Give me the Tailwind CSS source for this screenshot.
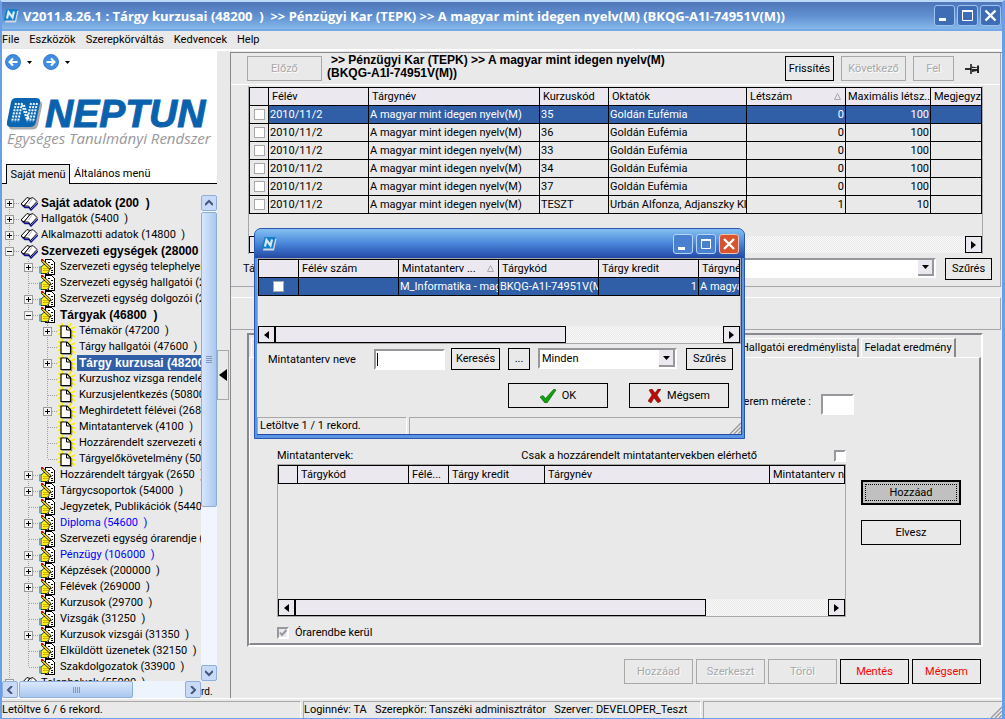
<!DOCTYPE html>
<html lang="hu">
<head>
<meta charset="utf-8">
<title>Neptun</title>
<script src="https://cdn.jsdelivr.net/npm/@tailwindcss/browser@4"></script>
</head>
<body class="relative flex h-screen min-h-[719px] flex-col overflow-hidden border-t-2 border-r-3 border-b border-l-2 border-[#6a9fe8] border-t-[#bcd8f8] bg-[#e9e9e9] font-['Roboto','Liberation_Sans',sans-serif] text-[11px] leading-4 text-black">

<svg class="hidden" aria-hidden="true">
  <symbol id="book" viewBox="0 0 18 16">
    <path d="M2 10L5 12.500L9 12.500L11 15L18 8" fill="none" stroke="#1010a0" stroke-width="1.500"/>
    <path d="M1 9L7 2.500L10 3.500L4 11Z" fill="#fff" stroke="#000"/>
    <path d="M10 3.500L13 2.500L17 6.500L10.500 13.500L8.500 11L4 11Z" fill="#fff" stroke="#000"/>
    <path d="M13 2.500L8.500 9" stroke="#b0b0b0"/>
  </symbol>
  <symbol id="hand" viewBox="0 0 16 16">
    <g shape-rendering="crispEdges">
      <path d="M7.500 .5H12.500L15.500 3.500V15.500H6.500V.5Z" fill="#fff" stroke="#000"/>
      <path d="M9 3h2M12 5h2M13 8h1M12 11h2M12 13h2M9 14h1" stroke="#000"/>
    </g>
    <path d="M2 8L5 5.500H8L12.500 9.500L10 10.500V13L8 14.500H2Z" fill="#ffee22" stroke="#000" stroke-width=".7"/>
    <path d="M3 1.500L11.500 9.500" stroke="#000" stroke-width="2.600"/>
    <path d="M3.500 2L11 9" stroke="#ffee22" stroke-width="1.400"/>
    <path d="M4 9.500h5M4 11.500h5" stroke="#b89800" stroke-width=".7"/>
    <rect x="2" y="0" width="2" height="2" fill="#c01010"/>
    <path d="M2 7.500H.5V14H2" fill="none" stroke="#18c8d8"/>
  </symbol>
  <symbol id="page" viewBox="0 0 17 16">
    <path d="M8 8L0 2M8 8L3-1M8 8L14-1M8 8L17 4M8 8L17 14M8 8L17 9M8 8L-1 7M8 8L-1 12M8 8L2 17M8 8L13 17" stroke="#fff000" stroke-width="1.800"/>
    <path d="M3 3H9L12.500 6.500V14.500H3Z" fill="#fff" stroke="#000" stroke-width="1.200"/>
    <path d="M8.500 3V7H12.500" fill="none" stroke="#000"/>
    <path d="M4 15.800H13.700V7" fill="none" stroke="#555" stroke-width=".8"/>
  </symbol>
  <symbol id="mark" viewBox="0 0 36 32">
    <path d="M9 3H31Q36 3 35 8L31 27Q30 31.500 25 31.500H5Q1 31 2 27Z" fill="#a9a9ae"/>
    <path d="M9 0H29Q34 0 33 5L29 24Q28 29 23 29H4Q-1 29 0 24L4 4Q5 0 9 0Z" fill="#0a66b2"/>
    <path d="M9 5L5 24M12 5L8 24M15 5L11 24M27 5L23 24M24 5L20 24M30 5L26 24M15 7L20 22M17 7L22 22" fill="none" stroke="#e8f3fc" stroke-width="2" stroke-dasharray="2 1.200"/>
  </symbol>
  <symbol id="small-mark" viewBox="0 0 16 14">
    <path d="M5 2H15.500L13 13.500H2Z" fill="#d4d8e0"/>
    <path d="M3.500 0H14.500L12 11.500H.5Z" fill="#1480cc"/>
    <path d="M4 9.500L5.500 3L9.500 8.500L11 2.500" fill="none" stroke="#d8ecfa" stroke-width="2.200"/>
  </symbol>
</svg>

<header class="flex h-[29px] shrink-0 items-center border-b-2 border-[#74a8e6] bg-linear-to-b from-[#4f76b8] via-[#5f8fd0] to-[#86b8ea] pr-px pl-px">
  <svg class="h-[14px] w-4"><use href="#small-mark"/></svg>
  <h1 class="ml-[4px] flex-1 truncate font-['Open_Sans',sans-serif] text-[13px] font-bold whitespace-pre text-white">V2011.8.26.1 : Tárgy kurzusai (48200  )  &gt;&gt; Pénzügyi Kar (TEPK) &gt;&gt; A magyar mint idegen nyelv(M) (BKQG-A1I-74951V(M))</h1>
  <div class="flex gap-[2px]">
    <button aria-label="Kis méret" class="flex h-[21px] w-[21px] rounded-[3px] border border-[#9cc4f0] bg-[#3e6db6]"><svg class="h-full w-full" viewBox="0 0 19 19"><path d="M4 13.500h7" stroke="#fff" stroke-width="3"/></svg></button>
    <button aria-label="Teljes méret" class="flex h-[21px] w-[21px] rounded-[3px] border border-[#9cc4f0] bg-[#3e6db6]"><svg class="h-full w-full" viewBox="0 0 19 19"><path d="M4.500 5v9.500h10V5" fill="none" stroke="#fff"/><path d="M4 5h11" stroke="#fff" stroke-width="2"/></svg></button>
    <button aria-label="Bezárás" class="flex h-[21px] w-[21px] rounded-[3px] border border-[#9cc4f0] bg-[#3e6db6]"><svg class="h-full w-full" viewBox="0 0 19 19"><path d="M4.500 4.500l10 10M14.500 4.500l-10 10" stroke="#fff" stroke-width="2.400"/></svg></button>
  </div>
</header>

<nav class="flex h-5 shrink-0 items-center gap-[10px] border-b-2 border-white">
  <a href="#">File</a><a href="#">Eszközök</a><a href="#">Szerepkörváltás</a><a href="#">Kedvencek</a><a href="#">Help</a>
</nav>

<div class="flex min-h-0 flex-1">
  <aside class="flex w-[215px] shrink-0 flex-col">
    <div class="h-[113px] shrink-0 bg-white pt-[3px] pl-[3px]">
      <div class="flex items-center gap-[6px]">
        <button aria-label="Vissza"><svg class="h-4 w-4" viewBox="0 0 16 16"><circle cx="8" cy="8" r="7.500" fill="#3f8ee4" stroke="#2a6cc0" stroke-width=".8"/><path d="M12.500 8H5M8 4.500L4.500 8L8 11.500" fill="none" stroke="#fff" stroke-width="2"/></svg></button>
        <button aria-label="Előzmények" class="w-[10px]"><svg class="h-[3px] w-[5px]" viewBox="0 0 5 3"><path d="M0 0h5L2.500 3z"/></svg></button>
        <button aria-label="Előre"><svg class="h-4 w-4" viewBox="0 0 16 16"><circle cx="8" cy="8" r="7.500" fill="#3f8ee4" stroke="#2a6cc0" stroke-width=".8"/><path d="M3.500 8H11M8 4.500L11.500 8L8 11.500" fill="none" stroke="#fff" stroke-width="2"/></svg></button>
        <button aria-label="Következők" class="w-[10px]"><svg class="h-[3px] w-[5px]" viewBox="0 0 5 3"><path d="M0 0h5L2.500 3z"/></svg></button>
      </div>
      <div class="mt-[28px] flex h-[32px] items-center gap-[2px] pl-[2px]">
        <svg class="h-8 w-9"><use href="#mark"/></svg>
        <div class="font-['Liberation_Sans',sans-serif] text-[39px] leading-8 font-bold text-[#0a62ae] italic [-webkit-text-stroke:1px_#0a62ae]">NEPTUN</div>
      </div>
      <div class="pl-[2px] font-['Open_Sans',sans-serif] text-[15px] leading-4 whitespace-nowrap text-[#98989c] italic">Egységes Tanulmányi Rendszer</div>
    </div>
    <div class="flex h-5 shrink-0 bg-white">
      <div class="w-1 border-b border-black"></div>
      <button class="w-16 border-x border-t border-black bg-[#e9e9e9] whitespace-nowrap">Saját menü</button>
      <button class="flex-1 border-b border-black pl-1 text-left">Általános menü</button>
    </div>
    <div class="flex min-h-0 flex-1 pt-[11px]">
      <div class="flex min-w-0 flex-1 flex-col">
        <ul id="tree" class="min-h-0 flex-1 overflow-hidden"></ul>
        <div class="flex h-[17px] shrink-0 bg-[#eef4fe]">
          <button aria-label="Balra" class="flex w-4 items-center justify-center rounded-[2px] border border-[#8faed8] bg-[#c8daf8]"><svg class="h-2 w-2" viewBox="0 0 8 8"><path d="M6 0L2 4l4 4" fill="none" stroke="#44587c" stroke-width="2"/></svg></button>
          <div class="ml-px flex w-[114px] items-center justify-center gap-px rounded-[2px] border border-[#8faed8] bg-linear-to-b from-[#dbe8ff] to-[#a9c8ee]"><i class="h-[6px] w-px bg-[#8098c0]"></i><i class="h-[6px] w-px bg-[#8098c0]"></i><i class="h-[6px] w-px bg-[#8098c0]"></i><i class="h-[6px] w-px bg-[#8098c0]"></i></div>
          <button aria-label="Jobbra" class="ml-auto flex w-4 items-center justify-center rounded-[2px] border border-[#8faed8] bg-[#c8daf8]"><svg class="h-2 w-2" viewBox="0 0 8 8"><path d="M2 0l4 4l-4 4" fill="none" stroke="#44587c" stroke-width="2"/></svg></button>
        </div>
      </div>
      <div class="flex w-4 shrink-0 flex-col bg-[#f0f5fe]">
        <button aria-label="Fel görgetés" class="flex h-4 items-center justify-center rounded-[2px] border border-[#8faed8] bg-[#c8daf8]"><svg class="h-2 w-2" viewBox="0 0 8 8"><path d="M0 6L4 2l4 4" fill="none" stroke="#44587c" stroke-width="2"/></svg></button>
        <div class="mt-px flex h-[295px] flex-col items-center justify-center gap-px rounded-[2px] border border-[#8faed8] bg-linear-to-r from-[#d8e6fe] to-[#a9c8ee]"><i class="h-px w-[6px] bg-[#8098c0]"></i><i class="h-px w-[6px] bg-[#8098c0]"></i><i class="h-px w-[6px] bg-[#8098c0]"></i><i class="h-px w-[6px] bg-[#8098c0]"></i></div>
        <button aria-label="Le görgetés" class="mt-auto flex h-4 items-center justify-center rounded-[2px] border border-[#8faed8] bg-[#c8daf8]"><svg class="h-2 w-2" viewBox="0 0 8 8"><path d="M0 2l4 4l4-4" fill="none" stroke="#44587c" stroke-width="2"/></svg></button>
        <div class="flex h-[17px] items-end bg-[#e9e9e9] text-[10px]"><span class="leading-3">rd.</span></div>
      </div>
    </div>
  </aside>

  <button aria-label="Panel elrejtése" class="mt-[299px] flex h-[50px] w-3 shrink-0 items-center justify-center border border-[#a8a8a8]"><svg class="h-3 w-2" viewBox="0 0 8 12"><path d="M8 0v12L0 6z"/></svg></button>

  <main class="ml-px mt-px flex min-w-0 flex-1 flex-col border-t border-l border-[#88888e]">
    <section class="mr-px flex shrink-0 flex-col border-r border-b border-[#a6a6a8] pb-[6px]">
      <div class="flex h-8 shrink-0 items-start border-b border-white pt-[3px] pr-[20px] pl-4">
        <button disabled class="h-[25px] w-[75px] shrink-0 border border-[#a8a8a8] text-[#a8a8a8] text-shadow-[1px_1px_0_#fff]">Előző</button>
        <h2 class="-mt-[2px] ml-[5px] w-[350px] font-['Liberation_Sans',sans-serif] text-[12px] leading-[13px] font-bold"><span class="pl-1">&gt;&gt; Pénzügyi Kar (TEPK) &gt;&gt; A magyar mint idegen nyelv(M)</span> (BKQG-A1I-74951V(M))</h2>
        <div class="ml-auto flex shrink-0 items-start gap-[7px]">
          <button class="h-[25px] w-[49px] border border-black">Frissítés</button>
          <button disabled class="h-[25px] w-[65px] border border-[#a8a8a8] text-[#a8a8a8] text-shadow-[1px_1px_0_#fff]">Következő</button>
          <button disabled class="h-[25px] w-[41px] border border-[#a8a8a8] text-[#a8a8a8] text-shadow-[1px_1px_0_#fff]">Fel</button>
          <button aria-label="Rögzítés" class="mt-2 ml-1"><svg class="h-[10px] w-[15px]" viewBox="0 0 15 10"><path d="M0 5h6" stroke="#000" stroke-width="1.600"/><path d="M6 0v10" stroke="#000" stroke-width="1.400"/><path d="M7 2.500L12 3.500V1.500H14V9H12V7L7 8Z" fill="#222"/><path d="M7 4.500h5" stroke="#ddd"/></svg></button>
        </div>
      </div>
      <div class="mx-[17px] mt-px flex h-[168px] flex-col border-x border-[#a8a8a8] pt-px">
        <div class="flex-1 overflow-hidden">
          <table class="w-full min-w-[733px] table-fixed border-collapse border border-black">
            <colgroup><col class="w-[19px]"><col class="w-[100px]"><col class="w-[171px]"><col class="w-[69px]"><col class="w-[138px]"><col class="w-[99px]"><col class="w-[85px]"><col></colgroup>
            <thead class="bg-[#ebe9ef]"><tr class="h-[18px]">
              <th class="border border-black"></th>
              <th class="border border-black pl-[3px] text-left font-normal">Félév</th>
              <th class="border border-black pl-[3px] text-left font-normal">Tárgynév</th>
              <th class="border border-black pl-[3px] text-left font-normal">Kurzuskód</th>
              <th class="border border-black pl-[3px] text-left font-normal">Oktatók</th>
              <th class="border border-black pr-1 pl-[3px] text-left font-normal"><span class="flex items-center justify-between">Létszám<svg class="h-[7px] w-[7px]" viewBox="0 0 7 7"><path d="M3.500 .5L6.500 6.500H.5z" fill="none" stroke="#a8a8a8"/></svg></span></th>
              <th class="overflow-hidden border border-black pl-[2px] text-left font-normal whitespace-nowrap">Maximális létsz...</th>
              <th class="overflow-hidden border border-black pl-[3px] text-left font-normal">Megjegyzés</th>
            </tr></thead>
            <tbody id="courses"></tbody>
          </table>
        </div>
        <div class="mb-px flex h-[17px] shrink-0 bg-[repeating-conic-gradient(#e8e8e8_0_25%,#fafafa_0_50%)] bg-size-[2px_2px]">
          <button aria-label="Balra" class="flex w-[17px] items-center justify-center border border-black bg-[#ebe9ef]"><svg class="h-2 w-[5px]" viewBox="0 0 5 8"><path d="M5 0v8L0 4z"/></svg></button>
          <button aria-label="Jobbra" class="ml-auto flex w-[17px] items-center justify-center border border-black bg-[#ebe9ef]"><svg class="h-2 w-[5px]" viewBox="0 0 5 8"><path d="M0 0v8l5-4z"/></svg></button>
        </div>
      </div>
      <div class="mt-[4px] flex items-start pr-2 pl-[12px]">
        <label for="filter" class="w-[94px] pt-[3px]">Tárgy szűrő</label>
        <div class="relative flex h-5 flex-1 border-2 border-[#98989c] border-r-white border-b-white bg-white">
          <select id="filter" class="w-full appearance-none bg-white"><option></option></select>
          <span class="pointer-events-none absolute inset-y-0 right-0 flex w-4 items-center justify-center border-r-2 border-b-2 border-[#98989c] bg-[#ebe9ef]"><svg class="h-1 w-[7px]" viewBox="0 0 7 4"><path d="M0 0h7L3.500 4z"/></svg></span>
        </div>
        <button class="ml-[9px] h-[22px] w-[47px] border border-black">Szűrés</button>
      </div>
    </section>

    <div class="mt-[10px] mr-px h-[33px] shrink-0 border-t border-r border-b border-[#a6a6a8] border-t-white"></div>

    <section class="mt-[3px] mr-[19px] ml-4 flex min-h-0 flex-1 flex-col border-2 border-[#88888e] border-r-white border-b-white pt-[2px]">
      <div class="flex h-5 shrink-0 items-end pl-[2px]" role="tablist">
        <div class="mr-[2px] h-[19px] w-[488px] rounded-tl-[2px] border-t border-l border-white"></div>
        <button role="tab" class="h-[19px] w-[118px] border-t border-r-2 border-white border-r-[#88888e] text-right whitespace-nowrap"><span class="pr-px">Hallgatói eredménylista</span></button>
        <button role="tab" class="ml-[2px] h-[19px] w-[95px] rounded-tl-[2px] border-t border-r-2 border-l border-white border-r-[#88888e] whitespace-nowrap">Feladat eredmény</button>
      </div>
      <div class="flex min-h-0 flex-1 flex-col border-t border-r-2 border-b-2 border-l border-white border-r-[#88888e] border-b-[#88888e] pr-[18px] pb-[2px] pl-[27px]">
        <div class="flex justify-end pt-[36px] pr-[107px]">
          <label for="room" class="mr-[10px]">Terem mérete :</label>
          <input id="room" class="h-[21px] w-[33px] border-2 border-[#98989c] border-r-white border-b-white bg-white">
        </div>
        <div class="mt-[33px] flex min-h-0 flex-1">
          <div class="flex min-w-0 flex-1 flex-col">
            <div class="flex h-4 items-center">
              <span>Mintatantervek:</span>
              <label for="only" class="mr-[77px] ml-auto">Csak a hozzárendelt mintatantervekben elérhető</label>
              <input id="only" type="checkbox" class="h-3 w-3 appearance-none border-2 border-[#98989c] border-r-white border-b-white bg-white">
            </div>
            <div class="flex min-h-0 flex-1 flex-col border border-[#a8a8a8]">
              <div class="min-h-0 flex-1 overflow-hidden">
                <table class="w-full table-fixed border-collapse border border-black bg-[#ebe9ef]">
                  <colgroup><col class="w-[19px]"><col class="w-[111px]"><col class="w-[40px]"><col class="w-[96px]"><col class="w-[225px]"><col></colgroup>
                  <thead><tr class="h-[18px]">
                    <th class="border border-black"></th>
                    <th class="border border-black pl-[3px] text-left font-normal">Tárgykód</th>
                    <th class="border border-black pl-[3px] text-left font-normal">Félé...</th>
                    <th class="border border-black pl-[3px] text-left font-normal">Tárgy kredit</th>
                    <th class="border border-black pl-[3px] text-left font-normal">Tárgynév</th>
                    <th class="overflow-hidden border border-r-0 border-black pl-[3px] text-left font-normal whitespace-nowrap">Mintatanterv neve</th>
                  </tr></thead>
                </table>
              </div>
              <div class="flex h-[17px] shrink-0 bg-[repeating-conic-gradient(#e8e8e8_0_25%,#fafafa_0_50%)] bg-size-[2px_2px]">
                <button aria-label="Balra" class="flex w-[17px] items-center justify-center border border-black bg-[#ebe9ef]"><svg class="h-2 w-[5px]" viewBox="0 0 5 8"><path d="M5 0v8L0 4z"/></svg></button>
                <div class="w-[411px] border border-black bg-[#ebe9ef]"></div>
                <button aria-label="Jobbra" class="ml-auto flex w-[17px] items-center justify-center border border-black bg-[#ebe9ef]"><svg class="h-2 w-[5px]" viewBox="0 0 5 8"><path d="M0 0v8l5-4z"/></svg></button>
              </div>
            </div>
            <label class="mt-2 flex items-center gap-[6px]">
              <span class="relative flex h-3 w-3"><input type="checkbox" checked disabled class="h-3 w-3 appearance-none border-2 border-[#98989c] border-r-white border-b-white bg-[#ebe9ef]"><svg class="pointer-events-none absolute inset-0 h-3 w-3" viewBox="0 0 12 12"><path d="M3 5.500l2 2.500l4.500-5" fill="none" stroke="#98989c" stroke-width="2"/></svg></span>
              Órarendbe kerül
            </label>
          </div>
          <div class="ml-[15px] flex w-[100px] flex-col gap-[15px] pt-8">
            <button class="h-[25px] border-2 border-black bg-[#c0c0c0] p-[2px]"><span class="flex h-full items-center justify-center border border-dotted border-black">Hozzáad</span></button>
            <button class="h-[25px] border border-black">Elvesz</button>
          </div>
        </div>
      </div>
    </section>

    <div class="mt-[12px] mr-[21px] mb-[14px] flex shrink-0 justify-end gap-[3px]">
      <button disabled class="h-[25px] w-[69px] border border-[#a8a8a8] text-[#a8a8a8] text-shadow-[1px_1px_0_#fff]">Hozzáad</button>
      <button disabled class="h-[25px] w-[69px] border border-[#a8a8a8] text-[#a8a8a8] text-shadow-[1px_1px_0_#fff]">Szerkeszt</button>
      <button disabled class="h-[25px] w-[69px] border border-[#a8a8a8] text-[#a8a8a8] text-shadow-[1px_1px_0_#fff]">Töröl</button>
      <button class="h-[25px] w-[69px] border border-black text-[#ff0000]">Mentés</button>
      <button class="h-[25px] w-[69px] border border-black text-[#ff0000]">Mégsem</button>
    </div>
  </main>
</div>

<footer class="flex h-5 shrink-0 gap-[2px] border-t border-white pt-[2px] whitespace-pre">
  <div class="w-[299px] border-t border-r border-[#a8a8a8] border-r-white">Letöltve 6 / 6 rekord.</div>
  <div class="w-[398px] border-t border-r border-l border-[#a8a8a8] border-r-white">Loginnév: TA   Szerepkör: Tanszéki adminisztrátor   Szerver: DEVELOPER_Teszt</div>
  <div class="flex flex-1 items-end justify-end border-t border-l border-[#a8a8a8]"><svg class="h-3 w-3" viewBox="0 0 12 12"><path d="M1 12L12 1M5 12l7-7M9 12l3-3" stroke="#98989c" stroke-width="1.300"/></svg></div>
</footer>

<section role="dialog" aria-label="Mintatanterv választó" class="absolute top-[226px] left-[252px] flex h-[211px] w-[491px] flex-col rounded-t-[7px] border border-[#2a56b0] bg-[#5a96e4]">
  <div class="flex h-[29px] shrink-0 items-center justify-between rounded-t-[6px] bg-linear-to-b from-[#84c0f0] via-[#4a86da] to-[#2448a4] pr-[5px] pl-[6px]">
    <svg class="h-[14px] w-4"><use href="#small-mark"/></svg>
    <div class="flex gap-[3px]">
      <button aria-label="Kis méret" class="h-5 w-5 rounded-[3px] border border-[#b8d4f4] bg-[#4a80d0]"><svg class="h-full w-full" viewBox="0 0 18 18"><path d="M4 13.500h7" stroke="#fff" stroke-width="3"/></svg></button>
      <button aria-label="Teljes méret" class="h-5 w-5 rounded-[3px] border border-[#b8d4f4] bg-[#4a80d0]"><svg class="h-full w-full" viewBox="0 0 18 18"><path d="M4.500 5v8.500h9V5" fill="none" stroke="#fff"/><path d="M4 5h10" stroke="#fff" stroke-width="2"/></svg></button>
      <button aria-label="Bezárás" class="h-5 w-5 rounded-[3px] border border-[#f0c0b0] bg-[#d9532c]"><svg class="h-full w-full" viewBox="0 0 18 18"><path d="M4 4l10 10M14 4L4 14" stroke="#fff" stroke-width="2.400"/></svg></button>
    </div>
  </div>
  <div class="mx-[2px] mb-[3px] flex min-h-0 flex-1 flex-col border-r border-b border-[#2448a4] bg-[#e9e9e9]">
    <div class="flex h-[86px] shrink-0 flex-col border border-[#a8a8a8]">
      <div class="flex-1 overflow-hidden">
        <table class="w-full table-fixed border-collapse border border-black">
          <colgroup><col class="w-[40px]"><col class="w-[100px]"><col class="w-[100px]"><col class="w-[100px]"><col class="w-[100px]"><col></colgroup>
          <thead class="bg-[#ebe9ef]"><tr class="h-[18px]">
            <th class="border border-black"></th>
            <th class="border border-black pl-[3px] text-left font-normal">Félév szám</th>
            <th class="border border-black pr-1 pl-[3px] text-left font-normal"><span class="flex items-center justify-between">Mintatanterv ...<svg class="h-[7px] w-[7px]" viewBox="0 0 7 7"><path d="M3.500 .5L6.500 6.500H.5z" fill="none" stroke="#a8a8a8"/></svg></span></th>
            <th class="border border-black pl-[3px] text-left font-normal">Tárgykód</th>
            <th class="border border-black pl-[3px] text-left font-normal">Tárgy kredit</th>
            <th class="overflow-hidden border border-black pl-[3px] text-left font-normal">Tárgynév</th>
          </tr></thead>
          <tbody><tr class="h-[18px] bg-[#305fa8] text-white">
            <td class="border border-black"><input type="checkbox" aria-label="Kijelölés" class="mx-auto block h-[11px] w-[11px] appearance-none border border-[#a8a8a8] bg-white"></td>
            <td class="border border-black"></td>
            <td class="overflow-hidden border border-black pl-px whitespace-nowrap">M_Informatika - magyar</td>
            <td class="overflow-hidden border border-black pl-px whitespace-nowrap">BKQG-A1I-74951V(M)</td>
            <td class="border border-black pr-px text-right">1</td>
            <td class="overflow-hidden border border-black pl-px whitespace-nowrap">A magyar mint</td>
          </tr></tbody>
        </table>
      </div>
      <div class="flex h-[17px] shrink-0 bg-[repeating-conic-gradient(#e8e8e8_0_25%,#fafafa_0_50%)] bg-size-[2px_2px]">
        <button aria-label="Balra" class="flex w-[17px] items-center justify-center border border-black bg-[#ebe9ef]"><svg class="h-2 w-[5px]" viewBox="0 0 5 8"><path d="M5 0v8L0 4z"/></svg></button>
        <div class="w-[291px] border border-black bg-[#ebe9ef]"></div>
        <button aria-label="Jobbra" class="ml-auto flex w-[17px] items-center justify-center border border-black bg-[#ebe9ef]"><svg class="h-2 w-[5px]" viewBox="0 0 5 8"><path d="M0 0v8l5-4z"/></svg></button>
      </div>
    </div>
    <div class="mt-1 flex items-start pr-2 pl-[11px]">
      <label for="plan" class="w-[106px] pt-1">Mintatanterv neve</label>
      <div class="relative mt-px h-[21px] w-[71px]">
        <input id="plan" class="block h-full w-full border-2 border-[#98989c] border-r-white border-b-white bg-white px-1 outline-none">
        <span class="pointer-events-none absolute top-[4px] left-[3px] h-[13px] w-px bg-black"></span>
      </div>
      <button class="ml-[6px] h-[22px] w-[49px] border border-black">Keresés</button>
      <button class="ml-2 h-[22px] w-[22px] border border-black">...</button>
      <div class="relative ml-2 h-[21px] w-[139px] border-2 border-[#98989c] border-r-white border-b-white bg-white">
        <select aria-label="Szűrő" class="block h-full w-full appearance-none bg-white pl-[2px]"><option>Minden</option></select>
        <span class="pointer-events-none absolute inset-y-0 right-0 flex w-4 items-center justify-center border-r-2 border-b-2 border-[#98989c] bg-[#ebe9ef]"><svg class="h-1 w-[7px]" viewBox="0 0 7 4"><path d="M0 0h7L3.500 4z"/></svg></span>
      </div>
      <button class="ml-auto h-[22px] w-[47px] border border-black">Szűrés</button>
    </div>
    <div class="mt-[13px] flex justify-end gap-[21px] pr-[12px]">
      <button class="flex h-[25px] w-[100px] items-center justify-center gap-[6px] border border-black"><svg class="h-[14px] w-4" viewBox="0 0 16 14"><path d="M0 8L3 6.500L5.500 9.500L14 0L16 1L7 14H5Z" fill="#10a010" stroke="#055c05" stroke-width=".6"/></svg>OK</button>
      <button class="flex h-[25px] w-[100px] items-center justify-center gap-[6px] border border-black"><svg class="h-[14px] w-[13px]" viewBox="0 0 13 14"><path d="M1 1L4 0L7 4L10 0H13L9 6L13 12L10 14L6 9L3 14L0 12L4 6Z" fill="#b80c0c" stroke="#700" stroke-width=".5"/></svg>Mégsem</button>
    </div>
    <div class="mt-auto flex h-[17px] gap-[2px]">
      <div class="w-[150px] border-t border-r border-l border-[#a8a8a8] border-r-white pl-[2px]">Letöltve 1 / 1 rekord.</div>
      <div class="flex flex-1 items-end justify-end border-t border-l border-[#a8a8a8]"><svg class="h-3 w-3" viewBox="0 0 12 12"><path d="M1 12L12 1M5 12l7-7M9 12l3-3" stroke="#98989c" stroke-width="1.300"/></svg></div>
    </div>
  </div>
</section>

<script>
  const courses = [
    ['35', 'Goldán Eufémia', 0, 100], ['36', 'Goldán Eufémia', 0, 100], ['33', 'Goldán Eufémia', 0, 100],
    ['34', 'Goldán Eufémia', 0, 100], ['37', 'Goldán Eufémia', 0, 100], ['TESZT', 'Urbán Alfonza, Adjanszky Klotild', 1, 10]
  ];
  document.getElementById('courses').innerHTML = courses.map((c, i) => `
    <tr class="${i ? 'h-[18px]' : 'h-[18px] bg-[#305fa8] text-white'}">
      <td class="border border-black bg-[#e9e9e9]"><input type="checkbox" aria-label="Kijelölés" class="mx-auto block h-[11px] w-[11px] appearance-none border border-[#a8a8a8] bg-white"></td>
      <td class="border border-black pl-px">2010/11/2</td>
      <td class="border border-black pl-px whitespace-nowrap">A magyar mint idegen nyelv(M)</td>
      <td class="border border-black pl-px">${c[0]}</td>
      <td class="overflow-hidden border border-black pl-px whitespace-nowrap">${c[1]}</td>
      <td class="border border-black pr-px text-right">${c[2]}</td>
      <td class="border border-black pr-px text-right">${c[3]}</td>
      <td class="border border-black"></td>
    </tr>`).join('');

  // [level, expander, label, style, last child of its parent]
  const nodes = [
    [0, '+', 'Saját adatok (200  )', 'b'], [0, '+', 'Hallgatók (5400  )'], [0, '+', 'Alkalmazotti adatok (14800  )'],
    [0, '-', 'Szervezeti egységek (28000  )', 'b'],
    [1, '+', 'Szervezeti egység telephelyei'], [1, '', 'Szervezeti egység hallgatói (2'], [1, '+', 'Szervezeti egység dolgozói (2'],
    [1, '-', 'Tárgyak (46800  )', 'b'],
    [2, '+', 'Témakör (47200  )'], [2, '', 'Tárgy hallgatói (47600  )'], [2, '+', 'Tárgy kurzusai (48200  )', 's'],
    [2, '', 'Kurzushoz vizsga rendelés'], [2, '', 'Kurzusjelentkezés (50800  )'], [2, '+', 'Meghirdetett félévei (26840  )'],
    [2, '', 'Mintatantervek (4100  )'], [2, '', 'Hozzárendelt szervezeti egység'], [2, '', 'Tárgyelőkövetelmény (50000  )', '', 1],
    [1, '+', 'Hozzárendelt tárgyak (2650  )'], [1, '+', 'Tárgycsoportok (54000  )'], [1, '', 'Jegyzetek, Publikációk (54400  )'],
    [1, '+', 'Diploma (54600  )', 'l'], [1, '', 'Szervezeti egység órarendje (5'], [1, '+', 'Pénzügy (106000  )', 'l'],
    [1, '+', 'Képzések (200000  )'], [1, '+', 'Félévek (269000  )'], [1, '', 'Kurzusok (29700  )'], [1, '', 'Vizsgák (31250  )'],
    [1, '+', 'Kurzusok vizsgái (31350  )'], [1, '', 'Elküldött üzenetek (32150  )'], [1, '', 'Szakdolgozatok (33900  )', '', 1],
    [0, '+', 'Telephelyek (55000  )']
  ];
  const styles = {
    b: "pl-[3px] font-['Liberation_Sans',sans-serif] text-[12px] font-bold",
    l: 'pl-[3px] text-[#0000ff]',
    s: "ml-px flex-1 bg-[#305fa8] pl-[2px] font-['Liberation_Sans',sans-serif] text-[12px] font-bold text-white"
  };
  const icons = ['#book', '#hand', '#page'];
  const iconSizes = ['h-4 w-[18px] shrink-0', 'mr-[2px] h-4 w-4 shrink-0', 'mr-px h-4 w-[17px] shrink-0'];
  document.getElementById('tree').innerHTML = nodes.map(([level, box, label, style, last], i) => {
    let lines = '';
    for (let k = 0; k < level; k++) lines += `<path d="M${7.5 + 19 * k} 0V16"/>`;
    const x = 7.5 + 19 * level;
    lines += `<path d="M${x} ${i ? 0 : 8}V${last ? 8 : 16}M${x} 8.5H${x + 11}"/>`;
    const expander = box ? `<rect x="${x - 4}" y="4.5" width="8" height="8" fill="#f2f2f2" stroke="#999" stroke-dasharray="none"/><path stroke="#000" stroke-dasharray="none" d="M${x - 2.5} 8.500h5${box === '+' ? `M${x} 6v5` : ''}"/>` : '';
    const w = 18 + 19 * level;
    return `<li class="flex h-4 items-center whitespace-pre"><svg class="h-4 shrink-0" width="${w}" height="16" fill="none" stroke="#a0a0a0" stroke-dasharray="1 1" shape-rendering="crispEdges">${lines}${expander}</svg><svg class="${iconSizes[level]}"><use href="${icons[level]}"/></svg><span class="${styles[style] || 'pl-[3px]'}">${label}</span></li>`;
  }).join('');
</script>
</body>
</html>
